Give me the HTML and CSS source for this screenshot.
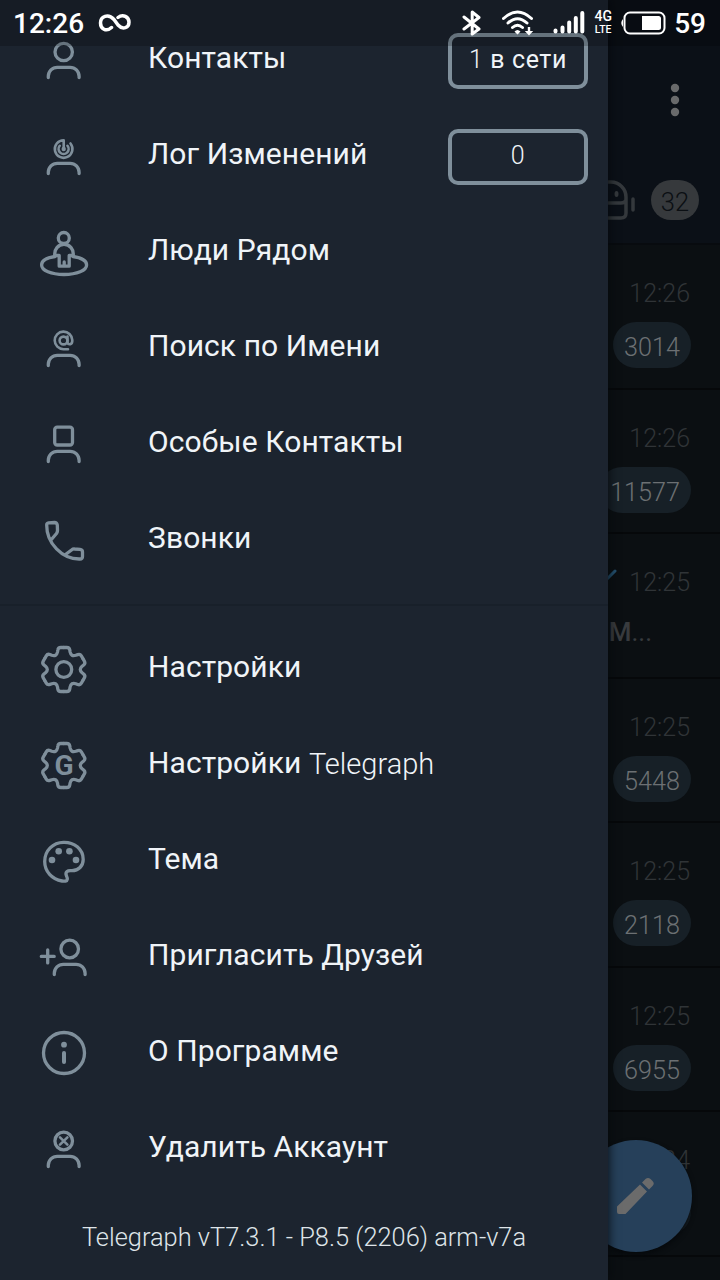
FILE: index.html
```
<!DOCTYPE html>
<html lang="ru">
	<head>
		<meta charset="UTF-8">
		<title>Telegraph</title>
		<link rel="stylesheet" href="styles.css">
	</head>
	<body>
		<!-- shared icon parts -->
		<svg class="defs">
			<defs>
				<path id="body" d="M12.3 44.6V43.3a9 9 0 0 1 9-9h12.8a9 9 0 0 1 9 9v1.3"/>
				<path id="tooth" d="M0-22H3Q5.6-22 6-19.5L6.3-17.5Q7.3-12.7 12-14.2L13.9-14.9Q16.25-15.85 17.55-13.6L19.05-11"/>
				<g id="gear" transform="translate(27.8 28.5)">
					<use href="#tooth"/>
					<use href="#tooth" transform="rotate(60)"/>
					<use href="#tooth" transform="rotate(120)"/>
					<use href="#tooth" transform="rotate(180)"/>
					<use href="#tooth" transform="rotate(240)"/>
					<use href="#tooth" transform="rotate(300)"/>
				</g>
			</defs>
		</svg>

		<div class="screen">
			<!-- dimmed chat list under the drawer -->
			<div class="chats">
				<div class="header">
					<svg class="more" width="12" height="34" viewBox="0 0 12 34"><circle cx="6" cy="5" r="4.2"/><circle cx="6" cy="17" r="4.2"/><circle cx="6" cy="29" r="4.2"/></svg>
					<div class="tabs">
						<svg class="bot" width="56" height="44" viewBox="0 0 56 44">
							<path d="M8 38V19A15 15 0 0 1 23 4h8a15 15 0 0 1 15 15v16q0 5-5 5H12q-4 0-4-2zM8 25h33q4 0 5-3M53 21v11"/>
							<ellipse cx="36.5" cy="16" rx="2" ry="3"/>
						</svg>
						<span class="tab_count">32</span>
					</div>
				</div>
				<div class="chat"><span class="time">12:26</span><span class="count">3014</span></div>
				<div class="chat"><span class="time">12:26</span><span class="count">11577</span></div>
				<div class="chat">
					<span class="time"><svg class="check" width="24" height="20" viewBox="0 0 24 20"><path d="M3 13l5 5L22 4"/></svg>12:25</span>
					<span class="message"><b>М</b>...</span>
				</div>
				<div class="chat"><span class="time">12:25</span><span class="count">5448</span></div>
				<div class="chat"><span class="time">12:25</span><span class="count">2118</span></div>
				<div class="chat"><span class="time">12:25</span><span class="count">6955</span></div>
				<div class="chat"><span class="time">12:24</span><span class="count">1204</span></div>
				<div class="chat"></div>
				<div class="fab">
					<svg width="40" height="40" viewBox="0 0 40 40"><path d="M1 30.5L24 8.5 31 15.5 9.5 38H3q-2 0-2-2zM26 6.5L29.5 3q2.5-2 5 0l2 2q2.5 2.5 0 5L33 13.5z"/></svg>
				</div>
			</div>

			<div class="drawer">
				<div class="menu">
					<a class="item" href="#">
						<svg class="icon" viewBox="0 0 56 56"><circle cx="27.7" cy="19" r="8.7"/><use href="#body"/></svg>
						<span>Контакты</span>
						<em class="badge"><i>1</i>&nbsp;в сети</em>
					</a>
					<a class="item" href="#">
						<svg class="icon" viewBox="0 0 56 56">
							<path class="thin" d="M27.7 20V11.2A8.8 8.8 0 1 0 34.5 14.5M23.7 16.8A5 5 0 1 0 31.5 16.8"/>
							<circle class="fill" cx="27.7" cy="20" r="2.2"/>
							<use href="#body"/>
						</svg>
						<span>Лог Изменений</span>
						<em class="badge"><i>0</i></em>
					</a>
					<a class="item" href="#">
						<svg class="icon" viewBox="0 0 56 56">
							<circle cx="27.8" cy="13" r="5.5"/>
							<path d="M18.8 30.5A9.3 9.8 0 1 1 37.2 30.5H33.2V41.2H23.2V30.5H18.8M28.2 37V41"/>
							<path d="M19 31.5C9 33 5.6 36.5 5.6 40C5.6 45.5 15 49.5 28 49.5S50.6 45.5 50.6 40C50.6 36.5 47 33 37 31.5"/>
						</svg>
						<span>Люди Рядом</span>
					</a>
					<a class="item" href="#">
						<svg class="icon" viewBox="0 0 56 56">
							<circle class="thin" cx="27.5" cy="19.5" r="3.9"/>
							<path class="thin" d="M31.5 15.5V21.5Q32 23.7 34.3 23.2Q36.5 22.5 36.3 19A8.8 8.8 0 1 0 27.5 28.2H32"/>
							<use href="#body"/>
						</svg>
						<span>Поиск по Имени</span>
					</a>
					<a class="item" href="#">
						<svg class="icon" viewBox="0 0 56 56"><rect x="18.7" y="10.2" width="17.8" height="17.8" rx="2.5"/><use href="#body"/></svg>
						<span>Особые Контакты</span>
					</a>
					<a class="item" href="#">
						<svg class="icon" viewBox="0 0 56 56"><path d="M12.5 9.8L18.5 9.5Q20.8 9.5 21.3 12L21.5 17.5Q21.5 19 20.5 20.5L15 27M29.5 41.5L35.5 37Q37 35.8 38.5 36L44 36.3Q46.5 36.5 46.5 39V43.5Q46.5 46 44 46C26 46.5 10.5 30 10.7 12Q10.7 10 12.5 9.8"/></svg>
						<span>Звонки</span>
					</a>
				</div>
				<div class="menu">
					<a class="item" href="#">
						<svg class="icon" viewBox="0 0 56 56"><use href="#gear"/><circle cx="27.8" cy="28.5" r="7.9"/></svg>
						<span>Настройки</span>
					</a>
					<a class="item" href="#">
						<svg class="icon" viewBox="0 0 56 56"><use href="#gear"/><text x="28" y="38.2">G</text></svg>
						<span>Настройки <i class="latin">Telegraph</i></span>
					</a>
					<a class="item" href="#">
						<svg class="icon" viewBox="0 0 56 56">
							<path d="M27.5 9.3C38 9 47.2 16 47.2 26.5C47.2 33 42.5 37.7 36 37.7C33.5 37.7 32.5 37.3 31 38.5C28 41 31.8 43.5 31.3 46.3C31 48.5 28.5 48.4 26 48C16 46.3 8.7 38.5 8.7 28.5C8.7 17.5 17 9.5 27.5 9.3Z"/>
							<g class="fill"><circle cx="16" cy="27" r="3.3"/><circle cx="22.7" cy="18.3" r="3.3"/><circle cx="33.4" cy="18.3" r="3.3"/><circle cx="40" cy="27" r="3.3"/></g>
						</svg>
						<span>Тема</span>
					</a>
					<a class="item" href="#">
						<svg class="icon" viewBox="0 0 56 56"><circle cx="33.7" cy="20" r="8.8"/><use href="#body" x="6" y="1"/><path d="M5.3 27.4H18.2M11.7 20.9V33.9"/></svg>
						<span>Пригласить Друзей</span>
					</a>
					<a class="item" href="#">
						<svg class="icon" viewBox="0 0 56 56"><circle cx="28" cy="28" r="20.5"/><circle class="fill" cx="28" cy="19.7" r="2.9"/><path class="thick" d="M28 28V37"/></svg>
						<span>О Программе</span>
					</a>
					<a class="item" href="#">
						<svg class="icon" viewBox="0 0 56 56"><circle cx="27.7" cy="20" r="8.8"/><path class="thin" d="M24 16.3L31.4 23.7M31.4 16.3L24 23.7"/><use href="#body" y="1"/></svg>
						<span>Удалить Аккаунт</span>
					</a>
				</div>
				<div class="version">Telegraph vT7.3.1 - P8.5 (2206) arm-v7a</div>
			</div>

			<div class="status">
				<span class="clock">12:26</span>
				<svg class="infinity" width="34" height="20" viewBox="0 0 34 20"><path d="M13.5 14.5C8 19.5 2.5 15.5 2.5 10C2.5 3.5 10 0 16 6.5L20 12C25 17.5 31 14.5 31 9.3C31 4 25 .5 20 4.5"/></svg>
				<svg class="bluetooth" width="20" height="26" viewBox="0 0 20 26"><path d="M2 7L17 19 10.2 24V2L17 7.5 2 19"/></svg>
				<svg class="wifi" width="32" height="26" viewBox="0 0 32 26">
					<path d="M1.5 8.5Q15.5-4.5 29.5 8.5M6 13Q15.5 4.5 25 13M10.5 17.5Q15.5 13 20.5 17.5"/>
					<path class="solid" d="M15.5 24.5L12.5 21.5Q15.5 18.5 18.5 21.5zM25.8 17h2.4v4h3L27 25.5 22.8 21h3z"/>
				</svg>
				<svg class="signal" width="32" height="24" viewBox="0 0 32 24"><path d="M2.5 19.5V20.5M9.5 16.5V20.5M16.2 11.5V20.5M22.8 7V20.5M29.3 2V20.5"/></svg>
				<span class="net"><span>4G</span><span>LTE</span></span>
				<svg class="battery" width="46" height="24" viewBox="0 0 46 24">
					<rect x="4.5" y="1.5" width="40" height="21" rx="5.5"/>
					<path class="solid" d="M3 8Q-.5 12 3 16zM22 5H38.5Q41 5 41 7.5V16.5Q41 19 38.5 19H22z"/>
				</svg>
				<span class="percent">59</span>
			</div>
		</div>
	</body>
</html>
```
FILE: styles.css
```
*{
	margin: 0;
	padding: 0;
	box-sizing: border-box;
}

body{
	font-family: Roboto, "Noto Sans", sans-serif;
	background: #0b0f12;
	overflow: hidden;
}

a{
	color: inherit;
	text-decoration: none;
}

i,em{
	font-style: normal;
}

svg{
	display: block;
	flex: none;
	fill: none;
	stroke-linecap: round;
	stroke-linejoin: round;
}

.defs{
	position: absolute;
	width: 0;
	height: 0;
}

.screen{
	position: relative;
	width: 720px;
	height: 1280px;
	overflow: hidden;
}

/* chat list */
.chats{
	height: 1280px;
	overflow: hidden;
	background: #0b0f12;
}

.header{
	display: flex;
	flex-direction: column;
	align-items: flex-end;
	height: 245px;
	padding: 83px 21px 0 0;
	background: #0b1017;
	border-bottom: 2px solid #080b0f;
}

.more{
	margin-right: 18px;
	fill: #696a6b;
}

.tabs{
	display: flex;
	align-items: center;
	margin-top: 61px;
}

.bot{
	stroke: #34383c;
	stroke-width: 3.5;
}

.bot ellipse{
	fill: #34383c;
	stroke: none;
}

.tab_count{
	width: 48px;
	height: 40px;
	margin-left: 15px;
	border-radius: 20px;
	background: #36393c;
	color: #0b0f13;
	font-size: 25.5px;
	font-weight: 300;
	line-height: 45px;
	text-align: center;
}

.chat{
	display: flex;
	flex-direction: column;
	align-items: flex-end;
	height: 144.5px;
	padding: 33px 29px 0 0;
	border-bottom: 2px solid #06080a;
}

.time{
	display: flex;
	padding-right: 1px;
	color: #303437;
	font-size: 25px;
	font-weight: 300;
	line-height: 32px;
}

.check{
	margin-right: 12px;
	stroke: #24506e;
	stroke-width: 3;
}

.count{
	height: 46px;
	margin-top: 12px;
	padding: 0 11px;
	border-radius: 23px;
	background: #172027;
	color: #6c7073;
	font-size: 25.2px;
	font-weight: 300;
	line-height: 51px;
}

.message{
	margin: 16px 39px 0 0;
	color: #383b3e;
	font-size: 26px;
	line-height: 34px;
}

.message b{
	font-weight: 500;
}

.fab{
	position: absolute;
	left: 580px;
	top: 1140px;
	display: flex;
	align-items: center;
	justify-content: center;
	width: 112px;
	height: 112px;
	border-radius: 50%;
	background: #26405a;
	box-shadow: 0 3px 5px #06090c;
}

.fab svg{
	fill: #6b6b6b;
}

/* side menu */
.drawer{
	position: absolute;
	left: 0;
	top: 0;
	width: 608px;
	height: 1280px;
	padding-top: 13px;
	background: #1c242f;
	box-shadow: 0 0 10px #05080b;
	color: #f0f4f8;
}

.menu + .menu{
	margin-top: 15px;
	padding-top: 15px;
	border-top: 2px solid #18202a;
}

.item{
	display: flex;
	align-items: center;
	height: 96px;
	padding: 0 20px 0 36px;
	font-size: 30px;
	line-height: 36px;
	letter-spacing: .08px;
}

.item > span{
	margin: -7px 0 0 56px;
}

.menu + .menu .item > span{
	margin-top: -5px;
}

.latin{
	position: relative;
	top: 1px;
	font-size: 29px;
	font-weight: 300;
	letter-spacing: 0;
}

.icon{
	width: 56px;
	height: 56px;
	stroke: #7f8f9b;
	stroke-width: 3.3;
}

.icon .thin{
	stroke-width: 2.6;
}

.icon .thick{
	stroke-width: 4;
}

.icon .fill{
	fill: #7f8f9b;
	stroke: none;
}

.icon text{
	fill: #7f8f9b;
	stroke: none;
	font-size: 28px;
	font-weight: 700;
	letter-spacing: 0;
	text-anchor: middle;
}

.badge{
	width: 140px;
	height: 56px;
	margin-left: auto;
	border: 4px solid #7f8f9b;
	border-radius: 10px;
	font-size: 25px;
	line-height: 46px;
	letter-spacing: .6px;
	text-align: center;
}

.badge i{
	font-weight: 300;
}

.version{
	margin-top: 22px;
	color: #dfe4e9;
	font-size: 25.4px;
	font-weight: 300;
	line-height: 36px;
	text-align: center;
}

/* status bar */
.status{
	position: absolute;
	left: 0;
	top: 0;
	display: flex;
	align-items: center;
	width: 720px;
	height: 46px;
	padding: 0 14px 0 13px;
	background: rgba(0, 0, 0, .2);
	color: #fff;
	font-size: 28px;
	font-weight: 500;
}

.status svg{
	stroke: #fff;
	stroke-width: 3;
}

.status svg .solid{
	fill: #fff;
	stroke: none;
}

.status .infinity{
	margin-left: 14px;
	stroke-width: 3.5;
}

.bluetooth{
	margin-left: auto;
}

.wifi{
	margin-left: 20px;
}

.signal{
	margin-left: 19px;
}

.status .signal{
	stroke-width: 4;
}

.status .battery{
	stroke-width: 2;
}

.net{
	display: flex;
	flex-direction: column;
	align-items: center;
	width: 18px;
	margin-left: 9px;
	font-size: 14px;
	line-height: 13px;
}

.net span:last-child{
	font-size: 10.5px;
}

.battery{
	margin-left: 8px;
}

.percent{
	margin-left: 8px;
}
```
